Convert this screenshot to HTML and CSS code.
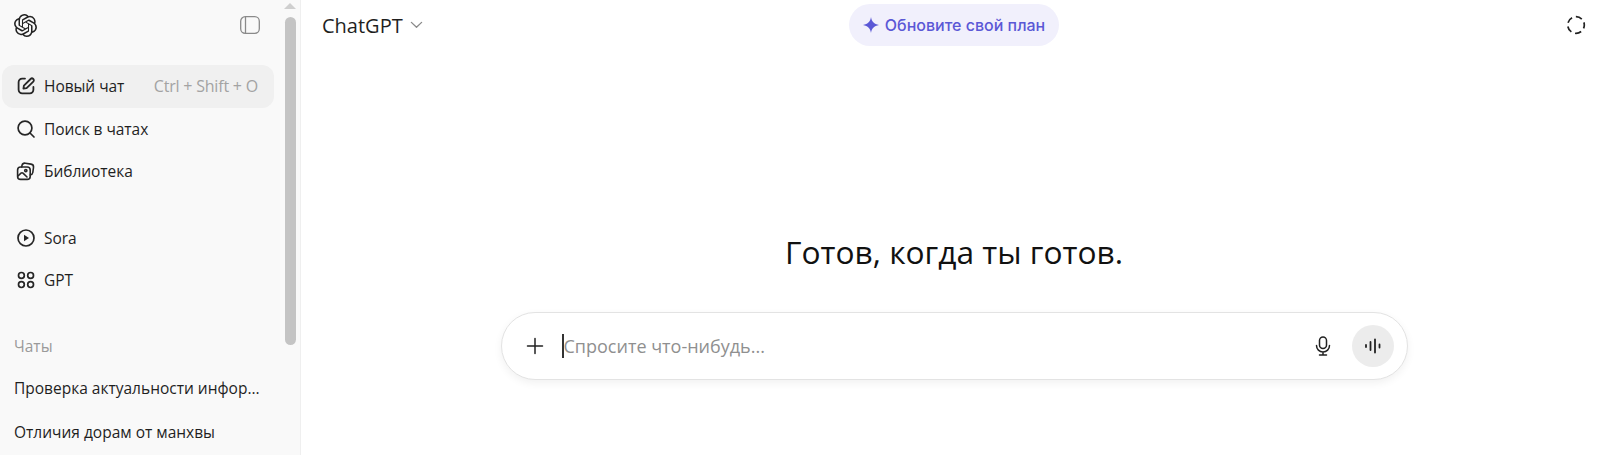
FILE: index.html
```html
<!DOCTYPE html>
<html lang="ru">

<head>
    <meta charset="UTF-8">
    <meta name="viewport" content="width=device-width, initial-scale=1.0">
    <title>ChatGPT</title>
    <link rel="stylesheet" href="styles.css">
</head>

<body>

    <!-- Sidebar -->
    <aside class="sidebar">
        <div class="side-content">
            <div class="side-top">
                <svg class="logo" viewBox="0 0 24 24"><path fill="#222" d="M22.2819 9.8211a5.9847 5.9847 0 0 0-.5157-4.9108 6.0462 6.0462 0 0 0-6.5098-2.9A6.0651 6.0651 0 0 0 4.9807 4.1818a5.9847 5.9847 0 0 0-3.9977 2.9 6.0462 6.0462 0 0 0 .7427 7.0966 5.98 5.98 0 0 0 .511 4.9107 6.051 6.051 0 0 0 6.5146 2.9001A5.9847 5.9847 0 0 0 13.2599 24a6.0557 6.0557 0 0 0 5.7718-4.2058 5.9894 5.9894 0 0 0 3.9977-2.9001 6.0557 6.0557 0 0 0-.7475-7.0729zm-9.022 12.6081a4.4755 4.4755 0 0 1-2.8764-1.0408l.1419-.0804 4.7783-2.7582a.7948.7948 0 0 0 .3927-.6813v-6.7369l2.02 1.1686a.071.071 0 0 1 .038.052v5.5826a4.504 4.504 0 0 1-4.4945 4.4944zm-9.6607-4.1254a4.4708 4.4708 0 0 1-.5346-3.0137l.142.0852 4.783 2.7582a.7712.7712 0 0 0 .7806 0l5.8428-3.3685v2.3324a.0804.0804 0 0 1-.0332.0615L9.74 19.9502a4.4992 4.4992 0 0 1-6.1408-1.6464zM2.3408 7.8956a4.485 4.485 0 0 1 2.3655-1.9728V11.6a.7664.7664 0 0 0 .3879.6765l5.8144 3.3543-2.0201 1.1685a.0757.0757 0 0 1-.071 0l-4.8303-2.7865A4.504 4.504 0 0 1 2.3408 7.872zm16.5963 3.8558L13.1038 8.364 15.1192 7.2a.0757.0757 0 0 1 .071 0l4.8303 2.7913a4.4944 4.4944 0 0 1-.6765 8.1042v-5.6772a.79.79 0 0 0-.407-.667zm2.0107-3.0231l-.142-.0852-4.7735-2.7818a.7759.7759 0 0 0-.7854 0L9.409 9.2297V6.8974a.0662.0662 0 0 1 .0284-.0615l4.8303-2.7866a4.4992 4.4992 0 0 1 6.6802 4.66zM8.3065 12.863l-2.02-1.1638a.0804.0804 0 0 1-.038-.0567V6.0742a4.4992 4.4992 0 0 1 7.3757-3.4537l-.142.0805L8.704 5.459a.7948.7948 0 0 0-.3927.6813zm1.0976-2.3654l2.602-1.4998 2.6069 1.4998v2.9994l-2.5974 1.4997-2.6067-1.4997Z"/></svg>
                <svg class="panel-icon" viewBox="0 0 20 20" fill="none" stroke="#8a8a8a" stroke-width="1.3"><rect x="0.7" y="1.7" width="18.6" height="16.6" rx="4.5"/><path d="M5.5 2v16"/></svg>
            </div>

            <nav class="menu">
                <a href="#" class="item active">
                    <svg class="ic" viewBox="0 0 20 20" fill="none" stroke="#262626" stroke-width="1.8" stroke-linecap="round" stroke-linejoin="round"><path d="M9 2.6H6.2A3.6 3.6 0 0 0 2.6 6.2v7.6a3.6 3.6 0 0 0 3.6 3.6h7.6a3.6 3.6 0 0 0 3.6-3.6V11"/><path d="M7.4 12.6l.5-3L14.6 3a1.9 1.9 0 0 1 2.7 2.7l-6.7 6.5z"/></svg>
                    <span class="label">Новый чат</span>
                    <span class="shortcut">Ctrl + Shift + O</span>
                </a>
                <a href="#" class="item">
                    <svg class="ic" viewBox="0 0 20 20" fill="none" stroke="#262626" stroke-width="1.7" stroke-linecap="round"><circle cx="9" cy="9" r="6.9"/><path d="M14 14l4 4"/></svg>
                    <span class="label">Поиск в чатах</span>
                </a>
                <a href="#" class="item">
                    <svg class="ic" viewBox="0 0 20 20" fill="none" stroke="#262626" stroke-width="1.6" stroke-linecap="round" stroke-linejoin="round"><rect x="1.6" y="6" width="12.6" height="12.4" rx="3"/><path d="M5.6 6l.4-1.6A3 3 0 0 1 9.4 2.2l5.6.9a3 3 0 0 1 2.5 3.4l-.7 5a3 3 0 0 1-2.6 2.5"/><path d="M2 15l3-2.8a1.5 1.5 0 0 1 2 0l4 3.8"/><circle cx="9.8" cy="9.6" r="1.1"/></svg>
                    <span class="label">Библиотека</span>
                </a>
            </nav>

            <nav class="menu menu-second">
                <a href="#" class="item">
                    <svg class="ic" viewBox="0 0 20 20" fill="none" stroke="#262626" stroke-width="1.7"><circle cx="10" cy="10" r="8"/><path d="M8 6.8l5 3.2-5 3.2z" fill="#262626" stroke="none"/></svg>
                    <span class="label">Sora</span>
                </a>
                <a href="#" class="item">
                    <svg class="ic" viewBox="0 0 20 20" fill="none" stroke="#262626" stroke-width="1.7"><circle cx="5.4" cy="5.4" r="2.9"/><circle cx="14.6" cy="5.4" r="2.9"/><circle cx="5.4" cy="14.6" r="2.9"/><circle cx="14.6" cy="14.6" r="2.9"/></svg>
                    <span class="label">GPT</span>
                </a>
            </nav>

            <div class="chats-title">Чаты</div>
            <a href="#" class="chat">Проверка актуальности инфор...</a>
            <a href="#" class="chat">Отличия дорам от манхвы</a>
        </div>

        <!-- Scrollbar -->
        <div class="scrollbar">
            <div class="scroll-arrow"></div>
            <div class="scroll-thumb"></div>
        </div>
    </aside>

    <!-- Main -->
    <main class="main">
        <header class="topbar">
            <div class="model">
                <span>ChatGPT</span>
                <svg class="chevron" viewBox="0 0 14 8" fill="none" stroke="#8a8a8a" stroke-width="1.4" stroke-linecap="round" stroke-linejoin="round"><path d="M1.5 1.2L7 6.5l5.5-5.3"/></svg>
            </div>
            <a href="#" class="upgrade">
                <svg class="spark" viewBox="0 0 16 16"><path fill="#5b58d6" d="M8 0c.6 4.4 3 7 8 8-5 1-7.4 3.6-8 8-.6-4.4-3-7-8-8 5-1 7.4-3.6 8-8z"/></svg>
                Обновите свой план
            </a>
            <svg class="temp" viewBox="0 0 20 20" fill="none" stroke="#222" stroke-width="1.7"><circle cx="10" cy="10" r="8.3" stroke-dasharray="6.5 3.93" stroke-dashoffset="3"/></svg>
        </header>

        <section class="center">
            <h1>Готов, когда ты готов.</h1>
            <div class="composer">
                <svg class="plus" viewBox="0 0 18 18" fill="none" stroke="#222" stroke-width="1.5" stroke-linecap="round"><path d="M9 1.5v15M1.5 9h15"/></svg>
                <div class="prompt"><span class="caret"></span>Спросите что-нибудь...</div>
                <svg class="mic" viewBox="0 0 20 20" fill="none" stroke="#222" stroke-width="1.5" stroke-linecap="round"><rect x="6.5" y="1" width="7" height="11.5" rx="3.5"/><path d="M3.5 9.5a6.5 6.5 0 0 0 13 0M10 16v3M6.5 19h7"/></svg>
                <div class="voice">
                    <svg viewBox="0 0 18 18" fill="none" stroke="#222" stroke-width="1.8" stroke-linecap="round"><path d="M2 8v2M6.5 5v8M11 2.5v13M15.5 7.5v3"/></svg>
                </div>
            </div>
        </section>
    </main>

</body>

</html>
```

FILE: styles.css
```css
/* Global */
html, body {
    margin: 0;
    padding: 0;
    height: 100%;
    overflow: hidden;
}

body {
    display: flex;
    font-family: "Open Sans", "Noto Sans", sans-serif;
    color: #1f1f1f;
    background-color: #fff;
}

a {
    color: inherit;
    text-decoration: none;
}

/* Sidebar */
.sidebar {
    flex: 0 0 300px;
    display: flex;
    height: 455px;
    background-color: #f9f9f9;
    border-right: 1px solid #efefef;
    overflow: hidden;
}

.side-content {
    flex: 1;
    min-width: 0;
    padding: 0 9px 0 2px;
}

.side-top {
    display: flex;
    align-items: center;
    justify-content: space-between;
    height: 50px;
    padding: 0 14px 0 12px;
}

.logo {
    width: 23px;
    height: 23px;
}

.panel-icon {
    width: 20px;
    height: 20px;
}

.menu {
    display: flex;
    flex-direction: column;
    margin-top: 15px;
}

.menu-second {
    margin-top: 24px;
}

.item {
    display: flex;
    align-items: center;
    height: 42.5px;
    padding: 0 16px 0 14px;
    border-radius: 12px;
    font-size: 15.5px;
    letter-spacing: -0.05px;
}

.item.active {
    background-color: #f0f0f0;
}

.ic {
    flex: 0 0 20px;
    width: 20px;
    height: 20px;
    margin-right: 8px;
}

.shortcut {
    margin-left: auto;
    color: #a3a3a3;
    font-size: 16px;
    letter-spacing: -0.2px;
}

.chats-title {
    margin: 33px 0 0 12px;
    color: #9a9a9a;
    font-size: 15.5px;
}

.chat {
    display: block;
    margin: 19.5px 0 0 12px;
    font-size: 15.5px;
    line-height: 24px;
    white-space: nowrap;
}

/* Scrollbar */
.scrollbar {
    flex: 0 0 14px;
    display: flex;
    flex-direction: column;
    align-items: center;
    padding-right: 3px;
}

.scroll-arrow {
    width: 0;
    height: 0;
    margin-top: 3px;
    border-left: 6px solid transparent;
    border-right: 6px solid transparent;
    border-bottom: 6px solid #cfcfcf;
}

.scroll-thumb {
    width: 11px;
    height: 328px;
    margin-top: 8px;
    background-color: #c4c4c4;
    border-radius: 6px;
}

/* Main */
.main {
    flex: 1;
    min-width: 0;
    display: flex;
    flex-direction: column;
}

.topbar {
    display: grid;
    grid-template-columns: 1fr auto 1fr;
    align-items: center;
    height: 50px;
    padding: 0 14px 0 21px;
}

.model {
    display: flex;
    align-items: center;
    gap: 7px;
    font-size: 20px;
}

.chevron {
    width: 13px;
    height: 8px;
}

.upgrade {
    display: flex;
    align-items: center;
    gap: 6px;
    height: 42px;
    padding: 0 13.5px;
    background-color: #f1f0fc;
    border-radius: 21px;
    color: #5b58d6;
    font-family: "Inter", "Noto Sans", sans-serif;
    font-size: 16px;
    font-weight: 500;
}

.spark {
    width: 16px;
    height: 16px;
}

.temp {
    justify-self: end;
    width: 20px;
    height: 20px;
}

.center {
    display: flex;
    flex-direction: column;
    align-items: center;
    padding-left: 7px;
}

h1 {
    margin: 180px 0 0;
    font-size: 31.7px;
    font-weight: 400;
    line-height: 44px;
    color: #111;
}

.composer {
    display: flex;
    align-items: center;
    box-sizing: border-box;
    width: 907px;
    height: 68px;
    margin-top: 38px;
    padding: 0 13px 0 24px;
    background-color: #fff;
    border: 1px solid #e3e3e3;
    border-radius: 34px;
    box-shadow: 0 3px 8px rgba(0, 0, 0, 0.06);
}

.plus {
    width: 18px;
    height: 18px;
    margin-right: 18px;
}

.prompt {
    flex: 1;
    display: flex;
    align-items: center;
    color: #8f8f8f;
    font-size: 18px;
}

.caret {
    width: 2px;
    height: 24px;
    background-color: #333;
}

.mic {
    width: 20px;
    height: 20px;
    margin-right: 19px;
}

.voice {
    display: flex;
    align-items: center;
    justify-content: center;
    width: 42px;
    height: 42px;
    background-color: #ececec;
    border-radius: 50%;
}

.voice svg {
    width: 18px;
    height: 18px;
}
```
